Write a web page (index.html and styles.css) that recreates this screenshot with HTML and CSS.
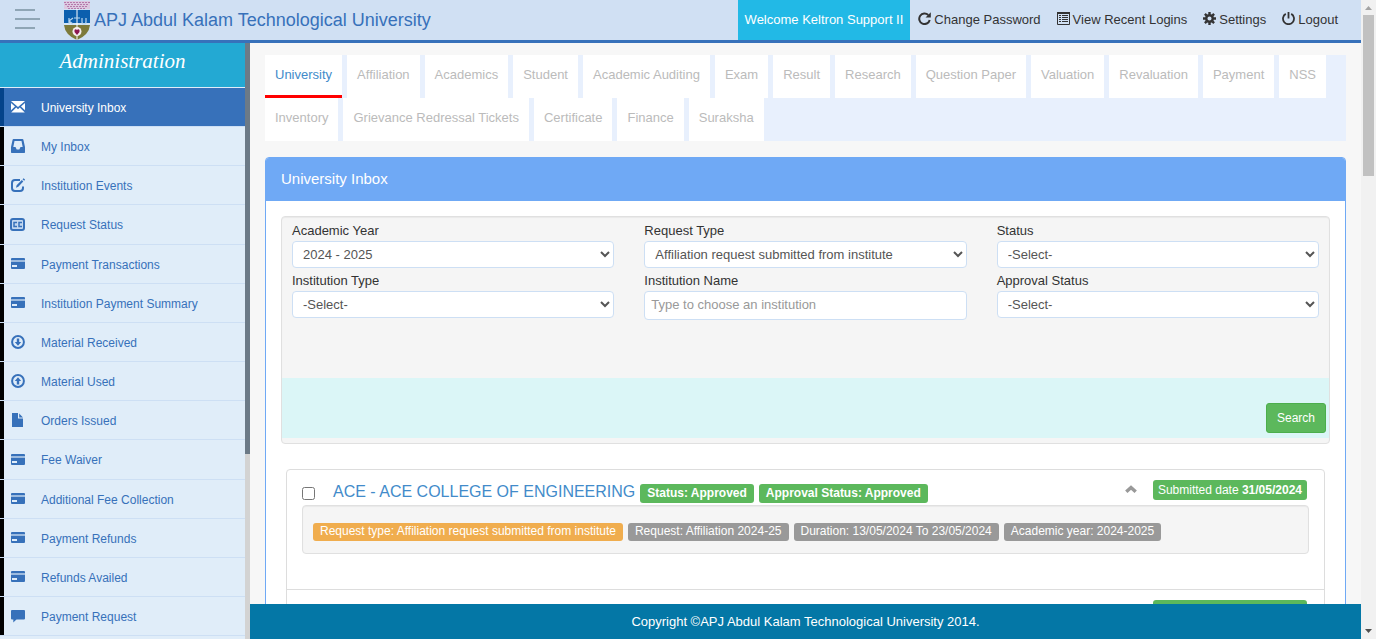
FILE: index.html
```html
<!DOCTYPE html>
<html lang="en">
<head>
<meta charset="utf-8">
<title>APJ Abdul Kalam Technological University</title>
<link rel="stylesheet" href="styles.css">
</head>
<body>
<svg class="sprite" aria-hidden="true">
  <symbol id="i-mail" viewBox="0 0 14 14"><path d="M0 1h14L7 7zM0 3 4 6.500 0 10.300zM14 3 10 6.500 14 10.300zM5.200 7.600 7 9.200 8.800 7.600 13.800 12.500H.2z"/></symbol>
  <symbol id="i-inbox" viewBox="0 0 14 14"><path fill-rule="evenodd" d="M2.5 0h9q.7 0 .9.7L14 8v5.3q0 .7-.7.7H.7Q0 14 0 13.300V8L1.600.7Q1.800 0 2.500 0zM3.500 2 2.300 8h2.200l1.200 2.500h2.600L9.500 8h2.200L10.500 2z"/></symbol>
  <symbol id="i-edit" viewBox="0 0 14 14"><path fill="none" stroke="currentColor" stroke-width="2" d="M9 2H4Q1 2 1 5v5q0 3 3 3h5q3 0 3-3V8.500"/><path d="M5 9.800 5.600 7.200 10.800 2l1.500 1.500L7.300 8.800zM11.500 1.200 12.600.2 14.200 1.600 13.200 2.800z"/></symbol>
  <symbol id="i-cc" viewBox="0 0 14 14" overflow="visible"><rect x="0" y="2" width="13" height="11" rx="2" fill="#c3d8f1" stroke="currentColor" stroke-width="2"/><path fill="none" stroke="currentColor" stroke-width="1.500" d="M6 5.500H3v4h3M11 5.500H8v4h3"/></symbol>
  <symbol id="i-card" viewBox="0 0 14 14"><path d="M0 3Q0 2 1 2h12q1 0 1 1V4H0z"/><path opacity=".4" d="M0 4h14v2H0z"/><path fill-rule="evenodd" d="M0 6h14V12q0 1-1 1H1q-1 0-1-1zM1 9v2h5V9z"/></symbol>
  <symbol id="i-down" viewBox="0 0 14 14"><circle cx="7" cy="7" r="5.900" fill="none" stroke="currentColor" stroke-width="2"/><path d="M5.800 3.500h2.400V7h2L7 10.700 3.800 7h2z"/></symbol>
  <symbol id="i-up" viewBox="0 0 14 14"><circle cx="7" cy="7" r="5.900" fill="none" stroke="currentColor" stroke-width="2"/><path d="M5.800 10.500h2.400V7h2L7 3.300 3.800 7h2z"/></symbol>
  <symbol id="i-file" viewBox="0 0 14 14"><path d="M1 0h6v5.500h5V14H1zM8.200.5 12 4.500H8.200z"/></symbol>
  <symbol id="i-chat" viewBox="0 0 14 14"><path d="M1 1h12q1 0 1 1v7.500q0 1-1 1H5.500L2.300 13.500v-3H1q-1 0-1-1V2q0-1 1-1z"/></symbol>
  <symbol id="i-refresh" viewBox="0 0 13 13"><path fill="none" stroke="currentColor" stroke-width="2" d="M10.300 3A5.300 5.300 0 1 0 11.700 8"/><path d="M12.800.3V5.600H7.600z"/></symbol>
  <symbol id="i-list" viewBox="0 0 13 13"><path fill="none" stroke="currentColor" d="M.5.5h12v12H.5z"/><path d="M0 0h13v2H0zM2 3h2v1H2zM5 3h6v1H5zM2 5h2v1H2zM5 5h6v1H5zM2 7h2v1H2zM5 7h6v1H5zM2 9h2v1H2zM5 9h6v1H5z"/></symbol>
  <symbol id="i-cog" viewBox="0 0 13 13"><circle cx="6.500" cy="6.500" r="3.300" fill="none" stroke="currentColor" stroke-width="2.500"/><path fill="none" stroke="currentColor" stroke-width="2.400" d="M6.500 0v2.500M6.500 10.500V13M0 6.500h2.500M10.500 6.500H13M1.900 1.900l1.700 1.700M9.400 9.400l1.700 1.700M1.900 11.100l1.700-1.700M9.400 3.600l1.700-1.700"/></symbol>
  <symbol id="i-off" viewBox="0 0 13 13"><path fill="none" stroke="currentColor" stroke-width="1.800" d="M3.800 1.900A5.500 5.500 0 1 0 9.200 1.900"/><path d="M5.600 0h1.800v6.500H5.600z"/></symbol>
</svg>

<div class="window">
  <div class="app">
    <header class="topbar">
      <button class="menu" type="button" aria-label="Toggle menu"><span></span><span class="long"></span><span></span></button>
      <svg class="logo" viewBox="0 0 26 39" role="img" aria-label="University crest">
        <rect width="26" height="8" fill="#dcc9e0"/>
        <path stroke="#b57aac" stroke-dasharray="2 1" d="M0 1.500h26M1 3.500h24M3 5.500h20M4 7.500h18"/>
        <path fill="#0b5fae" d="M0 9h26v13H0z"/>
        <path fill="#d5e6f5" d="M0 22h26v2H0z"/>
        <path fill="#7d7a3a" d="M0 24h26Q25 34 13 39 1 34 0 24z"/>
        <path stroke="#fff" d="M13 8v31"/>
        <path fill="none" stroke="#b8d5ee" stroke-width="1.200" d="M5 17v6M9 17l-4 3 4 3M10 17h6M18 17v4q0 2 2 2t2-2v-4"/>
        <circle cx="13" cy="30.500" r="4.500" fill="#f5eef0"/><path fill="#8d1750" d="M10.500 29q1.200-1.500 2.500 0 1.300-1.500 2.500 0v2L13 34l-2.500-3z"/>
      </svg>
      <span class="brand">APJ Abdul Kalam Technological University</span>
      <nav class="usernav">
        <a class="welcome" href="#">Welcome Keltron Support II</a>
        <a href="#"><svg><use href="#i-refresh"/></svg>Change Password</a>
        <a href="#"><svg><use href="#i-list"/></svg>View Recent Logins</a>
        <a href="#"><svg><use href="#i-cog"/></svg>Settings</a>
        <a href="#"><svg><use href="#i-off"/></svg>Logout</a>
      </nav>
    </header>

    <div class="columns">
      <aside class="sidebar">
        <div class="side-main">
          <h2>Administration</h2>
          <ul>
            <li><a class="active" href="#"><svg><use href="#i-mail"/></svg>University Inbox</a></li>
            <li><a href="#"><svg><use href="#i-inbox"/></svg>My Inbox</a></li>
            <li><a href="#"><svg><use href="#i-edit"/></svg>Institution Events</a></li>
            <li><a href="#"><svg><use href="#i-cc"/></svg>Request Status</a></li>
            <li><a href="#"><svg><use href="#i-card"/></svg>Payment Transactions</a></li>
            <li><a href="#"><svg><use href="#i-card"/></svg>Institution Payment Summary</a></li>
            <li><a href="#"><svg><use href="#i-down"/></svg>Material Received</a></li>
            <li><a href="#"><svg><use href="#i-up"/></svg>Material Used</a></li>
            <li><a href="#"><svg><use href="#i-file"/></svg>Orders Issued</a></li>
            <li><a href="#"><svg><use href="#i-card"/></svg>Fee Waiver</a></li>
            <li><a href="#"><svg><use href="#i-card"/></svg>Additional Fee Collection</a></li>
            <li><a href="#"><svg><use href="#i-card"/></svg>Payment Refunds</a></li>
            <li><a href="#"><svg><use href="#i-card"/></svg>Refunds Availed</a></li>
            <li><a href="#"><svg><use href="#i-chat"/></svg>Payment Request</a></li>
          </ul>
        </div>
        <div class="side-scroll"><div></div></div>
      </aside>

      <div class="page">
        <main>
          <nav class="tabs">
            <a class="active" href="#">University</a><a href="#">Affiliation</a><a href="#">Academics</a><a href="#">Student</a><a href="#">Academic Auditing</a><a href="#">Exam</a><a href="#">Result</a><a href="#">Research</a><a href="#">Question Paper</a><a href="#">Valuation</a><a href="#">Revaluation</a><a href="#">Payment</a><a href="#">NSS</a><a href="#">Inventory</a><a href="#">Grievance Redressal Tickets</a><a href="#">Certificate</a><a href="#">Finance</a><a href="#">Suraksha</a>
          </nav>

          <section class="panel">
            <h1>University Inbox</h1>
            <div class="panel-body">
              <form class="well filter">
                <div class="fields">
                  <div class="field"><label for="year">Academic Year</label><select id="year"><option>2024 - 2025</option></select></div>
                  <div class="field"><label for="rtype">Request Type</label><select id="rtype"><option>Affiliation request submitted from institute</option></select></div>
                  <div class="field"><label for="status">Status</label><select id="status"><option>-Select-</option></select></div>
                  <div class="field"><label for="itype">Institution Type</label><select id="itype"><option>-Select-</option></select></div>
                  <div class="field"><label for="iname">Institution Name</label><input id="iname" type="text" placeholder="Type to choose an institution"></div>
                  <div class="field"><label for="approval">Approval Status</label><select id="approval"><option>-Select-</option></select></div>
                </div>
                <div class="actions"><button class="search" type="button">Search</button></div>
              </form>

              <ul class="requests">
                <li>
                  <div class="request-head">
                    <input type="checkbox" aria-label="Select ACE College of Engineering">
                    <a class="college" href="#">ACE - ACE COLLEGE OF ENGINEERING</a>
                    <span class="badge">Status: Approved</span>
                    <span class="badge">Approval Status: Approved</span>
                    <button class="collapse" type="button" aria-label="Collapse"><svg viewBox="0 0 12 8"><path fill="none" stroke="currentColor" stroke-width="3.500" d="M1.300 6.700 6 2.500l4.700 4.200"/></svg></button>
                    <span class="date">Submitted date <b>31/05/2024</b></span>
                  </div>
                  <div class="well tags">
                    <span class="tag type">Request type: Affiliation request submitted from institute</span>
                    <span class="tag">Request: Affiliation 2024-25</span>
                    <span class="tag">Duration: 13/05/2024 To 23/05/2024</span>
                    <span class="tag">Academic year: 2024-2025</span>
                  </div>
                </li>
                <li>
                  <div class="request-head"><span class="date">Submitted date <b>31/05/2024</b></span></div>
                </li>
              </ul>
            </div>
          </section>
        </main>
        <footer>Copyright ©APJ Abdul Kalam Technological University 2014.</footer>
      </div>
    </div>
  </div>
  <div class="scrollbar" aria-hidden="true">
    <svg viewBox="0 0 15 15"><path fill="#a3a3a3" d="M4 10h7L7.500 6z"/></svg>
    <div class="thumb"></div>
    <svg viewBox="0 0 15 15"><path fill="#505050" d="M4 5h7L7.500 9z"/></svg>
  </div>
</div>
</body>
</html>
```
FILE: styles.css
```css
* { box-sizing: border-box; }

body {
  margin: 0;
  font: 13px/20px "Liberation Sans", Arial, sans-serif;
  color: #333;
  background: #f7f7f7;
}

a { text-decoration: none; color: inherit; }
ul { list-style: none; margin: 0; padding: 0; }
.sprite { display: none; }
svg { fill: currentColor; }

.window { display: flex; height: 100vh; overflow: hidden; }
.app { flex: 1; min-width: 0; display: flex; flex-direction: column; }

/* Top bar */
.topbar {
  display: flex;
  align-items: center;
  height: 43px;
  flex: none;
  padding: 0 15px;
  background: #d0e0f3;
  border-bottom: 3px solid #3771ba;
}
.menu {
  display: flex;
  flex-direction: column;
  gap: 7px;
  width: 49px;
  padding: 0 0 2px;
  border: 0;
  background: none;
}
.menu span { width: 20px; height: 2px; background: #8fa5b5; }
.menu .long { width: 25px; }
.logo { width: 26px; height: 39px; }
.brand { margin-left: 4px; font-size: 18px; color: #3771ba; }
.usernav { display: flex; margin-left: auto; line-height: 40px; }
.usernav a { display: flex; align-items: center; gap: 3px; padding: 0 8px; }
.usernav svg { width: 13px; height: 13px; margin-bottom: 3px; }
.usernav .welcome { padding: 0 7px; background: #22b9e6; color: #fff; }

.columns { flex: 1; display: flex; min-height: 0; }

/* Sidebar */
.sidebar { display: flex; width: 250px; flex: none; overflow: hidden; }
.side-main { flex: 1; background: #e0edf9; }
.sidebar h2 {
  margin: 0;
  height: 45px;
  border-bottom: 1px solid #e0edf9;
  background: #23a9d3;
  color: #fff;
  font: italic 21px/36px "Liberation Serif", "Times New Roman", serif;
  text-align: center;
}
.sidebar li { border-bottom: 1px solid #cddff4; }
.sidebar a {
  display: flex;
  align-items: center;
  gap: 16px;
  padding: 12px 0 9px 7px;
  border-left: 4px solid #000;
  font-size: 12px;
  line-height: 1.43;
  color: #3771ba;
}
.sidebar a svg { width: 14px; height: 14px; margin: -1px 0 3px; overflow: visible; }
.sidebar a.active { border-color: #04438a; background: #3771ba; color: #fff; }
.side-scroll { width: 5px; background: #d3d3d3; }
.side-scroll div { height: 69%; background: #6c7a87; }

/* Page */
.page { flex: 1; min-width: 0; display: flex; flex-direction: column; }
main { flex: 1; min-height: 0; overflow: hidden; padding: 12px 15px; }
footer {
  flex: none;
  background: #0477a6;
  color: #fff;
  line-height: 35px;
  text-align: center;
}

.tabs { display: flex; flex-wrap: wrap; column-gap: 5px; background: #e8f0fd; margin-bottom: 16px; }
.tabs a { padding: 10px; border-bottom: 3px solid #fff; background: #fff; color: #bbb; }
.tabs a.active { color: #428bca; border-color: #f00; }

.panel { border: 1px solid #6fa9f5; border-radius: 4px; background: #fff; overflow: hidden; }
.panel h1 {
  margin: 0;
  padding: 0 15px 2px;
  background: #6fa9f5;
  color: #fff;
  font-size: 15px;
  font-weight: normal;
  line-height: 41px;
}
.panel-body { padding: 15px; }
.well { border: 1px solid #e0e0e0; border-radius: 4px; background: #f5f5f5; box-shadow: inset 0 1px 1px rgba(0, 0, 0, .05); }

/* Filter form */
.filter { padding: 4px 0 5px; }
.fields { display: grid; grid-template-columns: repeat(3, 1fr); gap: 3px 30px; padding: 0 10px; }
.field label { display: block; }
.field select, .field input {
  display: block;
  width: 100%;
  height: 27px;
  border: 1px solid #cddff4;
  border-radius: 4px;
  background: #fff;
  color: #555;
  font: inherit;
}
.field select { padding: 0 0 0 6px; }
.field input { height: 29px; padding: 0 6px 2px; }
.field input::placeholder { color: #999; }
.actions { display: flex; justify-content: flex-end; margin-top: 58px; padding: 25px 3px 5px; background: #dbf6f7; }
.search {
  height: 30px;
  padding: 0 10px;
  border: 1px solid #4cae4c;
  border-radius: 3px;
  background: #5cb85c;
  color: #fff;
  font: 12px/18px "Liberation Sans", Arial, sans-serif;
}

/* Request list */
.requests { margin: 25px 5px 0; border: 1px solid #ddd; border-radius: 4px; }
.requests li { min-height: 120px; padding: 10px 15px; border-bottom: 1px solid #ddd; }
.request-head { display: flex; align-items: center; gap: 5px; height: 23px; margin-bottom: 2px; }
.request-head input { width: 13px; height: 13px; margin: 4px 13px 0 0; }
.college { font-size: 16px; color: #428bca; }
.badge, .date, .tag { border-radius: 3px; color: #fff; font-size: 12px; white-space: nowrap; }
.badge { margin-top: 4px; padding: 0 7px; background: #5cb85c; font-weight: bold; line-height: 19px; }
.date { align-self: flex-start; margin-right: 2px; padding: 0 5px; background: #5cb85c; }
.request-head .date:first-child { margin-left: auto; }
.collapse { margin: 0 11px 5px auto; padding: 0; border: 0; background: none; color: #999; line-height: 0; }
.collapse svg { width: 12px; height: 8px; }
.tags { display: flex; flex-wrap: wrap; gap: 5px; padding: 17px 10px 12px; }
.tag { padding: 0 7px 2px; background: #999; line-height: 16px; }
.tag.type { background: #f0ad4e; }

/* Window scrollbar */
.scrollbar { display: flex; flex-direction: column; width: 15px; background: #f1f1f1; }
.scrollbar svg { width: 15px; height: 15px; }
.scrollbar svg:last-child { margin-top: auto; }
.thumb { height: 161px; margin: 0 2px; background: #c1c1c1; }
```
